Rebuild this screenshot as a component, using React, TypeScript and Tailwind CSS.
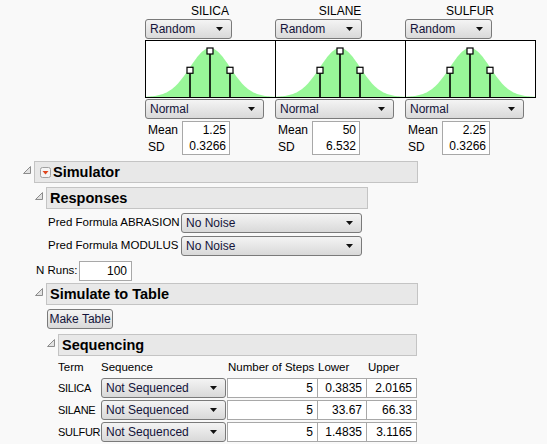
import type { ReactNode } from "react";

const factors = [
  { name: "SILICA", mean: "1.25", sd: "0.3266" },
  { name: "SILANE", mean: "50", sd: "6.532" },
  { name: "SULFUR", mean: "2.25", sd: "0.3266" },
];

const seqRows = [
  { term: "SILICA", steps: "5", lower: "0.3835", upper: "2.0165" },
  { term: "SILANE", steps: "5", lower: "33.67", upper: "66.33" },
  { term: "SULFUR", steps: "5", lower: "1.4835", upper: "3.1165" },
];

function Arrow() {
  return (
    <svg width="7" height="4" viewBox="0 0 7 4" className="shrink-0">
      <path d="M0 0h7L3.5 4z" fill="#111" />
    </svg>
  );
}

function Select({ label, width }: { label: string; width: string }) {
  return (
    <div
      className={`${width} shrink-0 h-[20px] flex items-center justify-between rounded-[3px] border border-[#7a7a7a] bg-linear-to-b from-[#f4f4f4] to-[#d9d9d9] pl-[4px] pr-[8px] text-[#14143a] text-[12px]`}
    >
      <span className="leading-none whitespace-nowrap">{label}</span>
      <Arrow />
    </div>
  );
}

function Cell({ value, width, extra = "" }: { value: string; width: string; extra?: string }) {
  return (
    <div
      className={`${width} shrink-0 h-[20px] flex items-center justify-end border border-[#a8a8a8] bg-white pr-[4px] text-[12px] ${extra}`}
    >
      {value}
    </div>
  );
}

function Tri() {
  return (
    <svg width="8" height="8" viewBox="0 0 8 8">
      <polygon points="7.5,0.5 7.5,7.5 0.5,7.5" fill="#e2e2e2" stroke="#8c8c8c" strokeWidth="1" />
    </svg>
  );
}

function RedMenu() {
  return (
    <svg width="11" height="11" viewBox="0 0 11 11" className="mr-[2px]">
      <rect x="0.5" y="0.5" width="10" height="10" rx="2" fill="#f4f4f4" stroke="#a0a0a0" />
      <path d="M2.5 4h6L5.5 7.5z" fill="#e0461e" />
    </svg>
  );
}

function Outline({
  title,
  width,
  menu = false,
  pad = "pl-[3px]",
  children,
}: {
  title: string;
  width: string;
  menu?: boolean;
  pad?: string;
  children?: ReactNode;
}) {
  return (
    <div>
      <div className="flex items-start">
        <div className="w-[12px] shrink-0 h-[22px] pt-[5px] pl-[1px]">
          <Tri />
        </div>
        <div
          className={`${width} h-[22px] flex items-center border border-[#c4c4c4] bg-[#e8e8e8] ${pad} text-[14.5px] font-bold leading-none`}
        >
          {menu && <RedMenu />}
          {title}
        </div>
      </div>
      <div className="pl-[12px]">{children}</div>
    </div>
  );
}

function Curve() {
  // normal density, sigma = 20px, centred in the plot
  const yAt = (x: number) => 56 - 49 * Math.exp(-(((x - 64) / 20) ** 2) / 2);
  const pts: string[] = [];
  for (let x = 0; x <= 129; x++) pts.push(`${x},${yAt(x).toFixed(2)}`);
  return (
    <svg width="129" height="56" viewBox="0 0 129 56" className="block">
      <path d={`M0,56 L${pts.join(" L")} L129,56 Z`} fill="#99f799" />
      {[44, 64, 84].map((x) => (
        <g key={x}>
          <line x1={x} y1={yAt(x) + 6} x2={x} y2={56} stroke="#000" strokeWidth="1.6" />
          <rect x={x - 3} y={yAt(x)} width="6" height="6" fill="#fff" stroke="#000" strokeWidth="1.2" />
        </g>
      ))}
    </svg>
  );
}

function FactorPanel({ name, mean, sd }: { name: string; mean: string; sd: string }) {
  return (
    <div className="w-[130px] flex flex-col">
      <div className="h-[19px] w-full text-center leading-[23px] text-[12px]">{name}</div>
      <Select label="Random" width="w-[87px]" />
      <div className="w-[131px] h-[58px] border border-black bg-white mt-px">
        <Curve />
      </div>
      <div className="mt-px">
        <Select label="Normal" width="w-[119px]" />
      </div>
      <div className="mt-[2px] flex flex-col text-[12px]">
        <div className="flex items-center h-[17px]">
          <span className="w-[37px] pl-[3px]">Mean</span>
          <div className="w-[48px] h-[18px] border border-[#a8a8a8] bg-white flex items-center justify-end pr-[3px]">
            {mean}
          </div>
        </div>
        <div className="flex items-center h-[17px]">
          <span className="w-[37px] pl-[3px]">SD</span>
          <div className="w-[48px] h-[17px] border border-t-0 border-[#a8a8a8] bg-white flex items-center justify-end pr-[3px]">
            {sd}
          </div>
        </div>
      </div>
    </div>
  );
}

export default function App() {
  return (
    <div className="w-[547px] h-[444px] overflow-hidden bg-[#f9f9f9] text-black text-[11.5px] font-['Liberation_Sans',Arial,sans-serif]">
      <div className="flex pl-[145px]">
        {factors.map((f) => (
          <FactorPanel key={f.name} {...f} />
        ))}
      </div>

      <div className="pl-[22px] mt-[6px]">
        <Outline title="Simulator" width="w-[384px]" menu pad="pl-[5px]">
          <div className="mt-[4px]">
            <Outline title="Responses" width="w-[322px]">
              <div className="mt-[4px] flex flex-col gap-[3px] pl-[2px]">
                {["Pred Formula ABRASION", "Pred Formula MODULUS"].map((r) => (
                  <div key={r} className="flex items-center">
                    <span className="w-[133px] shrink-0 whitespace-nowrap">{r}</span>
                    <Select label="No Noise" width="w-[181px]" />
                  </div>
                ))}
              </div>
            </Outline>
          </div>

          <div className="mt-[5px] pl-[2px] flex items-center">
            <span className="w-[43px] shrink-0 whitespace-nowrap">N Runs:</span>
            <Cell value="100" width="w-[53px]" />
          </div>

          <div className="mt-[2px]">
            <Outline title="Simulate to Table" width="w-[372px]">
              <div className="mt-[4px] pl-px">
                <button className="w-[66px] h-[20px] rounded-[3px] border border-[#7a7a7a] bg-linear-to-b from-[#f4f4f4] to-[#d9d9d9] text-[12px] text-[#14143a] leading-none">
                  Make Table
                </button>
              </div>
              <div className="mt-[5px]">
                <Outline title="Sequencing" width="w-[359px]">
                  <div className="flex items-end h-[22px] pb-[2px] whitespace-nowrap">
                    <span className="w-[43px] shrink-0">Term</span>
                    <span className="w-[127px] shrink-0">Sequence</span>
                    <span className="w-[90px] shrink-0">Number of Steps</span>
                    <span className="w-[50px] shrink-0">Lower</span>
                    <span className="w-[50px] shrink-0">Upper</span>
                  </div>
                  <div className="flex flex-col gap-[2px]">
                    {seqRows.map((r) => (
                      <div key={r.term} className="flex items-center">
                        <span className="w-[43px] shrink-0 whitespace-nowrap text-[11px] tracking-[-0.3px]">{r.term}</span>
                        <Select label="Not Sequenced" width="w-[125px]" />
                        <Cell value={r.steps} width="w-[91px]" extra="ml-px" />
                        <Cell value={r.lower} width="w-[50px]" extra="-ml-px" />
                        <Cell value={r.upper} width="w-[51px]" extra="-ml-px" />
                      </div>
                    ))}
                  </div>
                </Outline>
              </div>
            </Outline>
          </div>
        </Outline>
      </div>
    </div>
  );
}
